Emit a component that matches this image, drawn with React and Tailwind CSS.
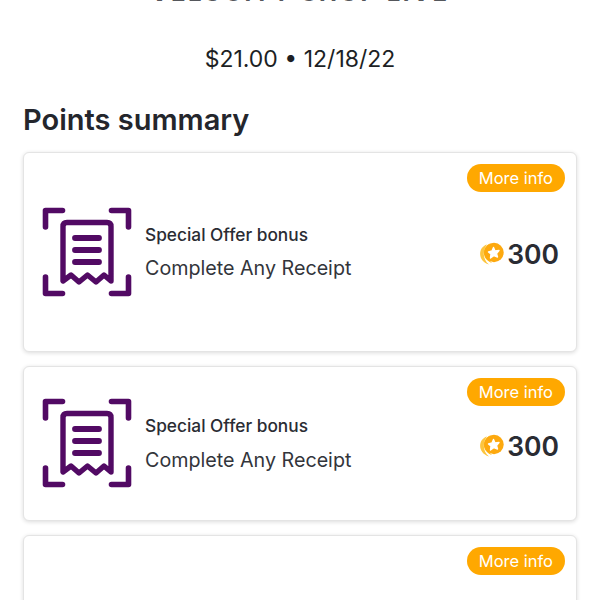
const font = { fontFamily: 'Inter, "Noto Sans", sans-serif' };

function ReceiptIcon() {
  return (
    <svg width="90" height="90" viewBox="0 0 90 90" fill="none" stroke="#520a64" strokeLinecap="round" strokeLinejoin="round" className="shrink-0">
      <g strokeWidth="5.6">
        <path d="M3.5 20V3.5H20.5" />
        <path d="M69.5 3.5H86.5V20" />
        <path d="M3.5 70V86.5H20.5" />
        <path d="M69.5 86.5H86.5V70" />
      </g>
      <path strokeWidth="5.4" d="M21 74V19.5Q21 15.5 25 15.5H65Q69 15.5 69 19.5V74L62 68L54 75L45.5 68L37 75L29 68Z" />
      <g strokeWidth="5.8">
        <path d="M33 31H57" />
        <path d="M33 43H57" />
        <path d="M33 55H57" />
      </g>
    </svg>
  );
}

function Coin() {
  return (
    <svg width="26" height="24" viewBox="0 0 26 24" className="shrink-0">
      <path d="M9 2.5C0 5 -1 19 11 22.5C5 18 4 9 9 2.5Z" fill="#fcc53f" />
      <path d="M12 1.5C4 5 3 17 14 21C8 16 8 7 12 1.5Z" fill="#fdb515" />
      <circle cx="16" cy="10.5" r="9.7" fill="#fda90f" />
      <path d="M15.5 5.5L17 9L21 8.5L18.5 11.5L19.5 15L16 13.5L12.5 16L13 12L10.5 10L14 9Z" fill="#fff" strokeLinejoin="round" stroke="#fff" strokeWidth="1.4" />
    </svg>
  );
}

function Card({ h, children }) {
  return (
    <div className={`relative bg-white border border-[#e4e4e4] rounded-md shadow-[0_1px_4px_rgba(0,0,0,0.14)] ${h}`}>
      <span className="absolute top-[11px] right-[11px] h-[28px] px-[12px] rounded-[14px] bg-[#ffa800] text-white text-[16.5px] leading-[28px]">More info</span>
      {children}
    </div>
  );
}

function Row({ pb, textBox, pointsBox }) {
  return (
    <div className={`flex items-center h-full pl-[18px] pr-[17px] ${pb}`}>
      <ReceiptIcon />
      <div className={`ml-[13px] flex-1 flex flex-col ${textBox}`}>
        <div className="text-[17.3px] leading-[20px] font-medium text-[#2a2c33]">Special Offer bonus</div>
        <div className="text-[19.7px] leading-[20px] text-[#33353b]">Complete Any Receipt</div>
      </div>
      <div className={`flex items-center gap-[3px] ${pointsBox}`}>
        <Coin />
        <span className="text-[26.5px] leading-[32px] font-semibold text-[#2a2c33]">300</span>
      </div>
    </div>
  );
}

export default function App() {
  return (
    <div className="w-[600px] h-[600px] overflow-hidden bg-white" style={font}>
      <div className="mt-[-19px] text-center text-[24px] leading-[24px] font-bold tracking-[2.5px] text-[#55575c] whitespace-nowrap">VELOCITY SHOP LIVE</div>
      <div className="mt-[39px] text-center text-[23px] leading-[30px] text-[#1d1f24]">$21.00 • 12/18/22</div>
      <h1 className="mt-[28px] px-[23px] text-[29px] leading-[36px] font-semibold text-[#24262c]">Points summary</h1>
      <div className="mt-[14px] mx-[23px] flex flex-col gap-[14px]">
        <Card h="h-[200px]"><Row pb="pb-[0px]" textBox="gap-[13px] pb-[2px]" pointsBox="pt-[3px]" /></Card>
        <Card h="h-[155px]"><Row pb="pb-[2px]" textBox="gap-[14px]" pointsBox="pt-[6px]" /></Card>
        <Card h="h-[120px]" />
      </div>
    </div>
  );
}
